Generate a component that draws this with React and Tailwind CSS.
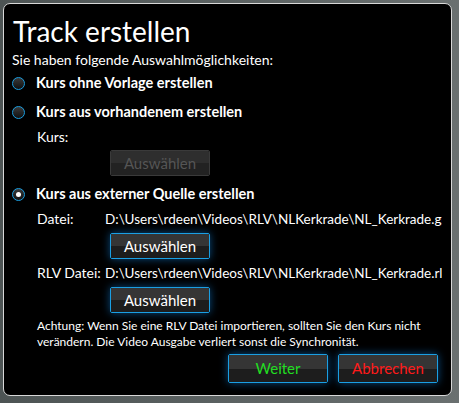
import React from 'react';

const font = { fontFamily: 'Lato, "Open Sans", sans-serif' };

const Radio = ({ checked }) => (
  <span className="flex items-center justify-center w-[13px] h-[13px] rounded-full
    border-[1.5px] border-[#1b9ee0] bg-gradient-to-b from-[#3a3a3a] to-[#111111] shrink-0">
    {checked && <span className="w-[5px] h-[5px] rounded-full bg-white" />}
  </span>
);

const Btn = ({ children, disabled, color = 'text-white', className = '' }) => (
  <button
    className={`relative h-[26px] rounded-[2px] text-[15px] overflow-hidden
      ${disabled
        ? 'border border-[#3a3a3a] text-[#555555]'
        : `border border-[#1a9fe3] ${color} shadow-[0_0_8px_rgba(20,150,255,0.5)]`}
      ${className}`}>
    <span className={`absolute inset-x-0 top-0 h-1/2 ${disabled ? 'bg-[#2e2e2e]' : 'bg-[#353535]'}`} />
    <span className={`absolute inset-x-0 bottom-0 h-1/2 ${disabled ? 'bg-[#222222]' : 'bg-[#1d1d1d]'}`} />
    <span className="relative">{children}</span>
  </button>
);

export default function App() {
  return (
    <div className="w-[459px] h-[403px] bg-gradient-to-r from-[#4d5454] to-[#6a7070] p-[3px] pb-[7px] pr-[7px]" style={font}>
      <div className="w-full h-full bg-black rounded-[7px] border border-[#d8d8d8] text-white overflow-hidden">
        <h1 className="text-[28px] leading-none font-normal pl-[9px] pt-[13px]">Track erstellen</h1>
        <p className="text-[14px] pl-[8px] mt-[6px] leading-[18px]">Sie haben folgende Auswahlmöglichkeiten:</p>

        <div className="flex items-center gap-[11px] pl-[8px] mt-[4px] h-[20px]">
          <Radio />
          <span className="font-bold text-[14.5px]">Kurs ohne Vorlage erstellen</span>
        </div>
        <div className="flex items-center gap-[11px] pl-[8px] mt-[9px] h-[20px]">
          <Radio />
          <span className="font-bold text-[14.5px]">Kurs aus vorhandenem erstellen</span>
        </div>
        <div className="pl-[33px] mt-[6px] text-[14px] leading-[18px]">Kurs:</div>
        <div className="pl-[106px] mt-[4px]">
          <Btn disabled className="w-[100px]">Auswählen</Btn>
        </div>

        <div className="flex items-center gap-[11px] pl-[8px] mt-[8px] h-[20px]">
          <Radio checked />
          <span className="font-bold text-[14.5px]">Kurs aus externer Quelle erstellen</span>
        </div>
        <div className="flex pl-[33px] mt-[6px] text-[14px] leading-[18px] whitespace-nowrap">
          <span className="w-[68px] shrink-0">Datei:</span>
          <span className="overflow-hidden w-[337px] text-[13.5px]">D:\Users\rdeen\Videos\RLV\NLKerkrade\NL_Kerkrade.gpx</span>
        </div>
        <div className="pl-[106px] mt-[5px]">
          <Btn className="w-[100px]">Auswählen</Btn>
        </div>
        <div className="flex pl-[33px] mt-[5px] text-[14px] leading-[18px] whitespace-nowrap">
          <span className="w-[68px] shrink-0">RLV Datei:</span>
          <span className="overflow-hidden w-[337px] text-[13.5px]">D:\Users\rdeen\Videos\RLV\NLKerkrade\NL_Kerkrade.rlv</span>
        </div>
        <div className="pl-[106px] mt-[5px]">
          <Btn className="w-[100px]">Auswählen</Btn>
        </div>

        <p className="pl-[33px] pr-[8px] mt-[5px] text-[12px] leading-[16px]">
          Achtung: Wenn Sie eine RLV Datei importieren, sollten Sie den Kurs nicht verändern. Die Video Ausgabe verliert sonst die Synchronität.
        </p>

        <div className="flex justify-end gap-[10px] pr-[13px] mt-[4px]">
          <Btn color="text-[#22dd22]" className="w-[100px] h-[29px]">Weiter</Btn>
          <Btn color="text-[#ff1a1a]" className="w-[100px] h-[29px]">Abbrechen</Btn>
        </div>
      </div>
    </div>
  );
}
